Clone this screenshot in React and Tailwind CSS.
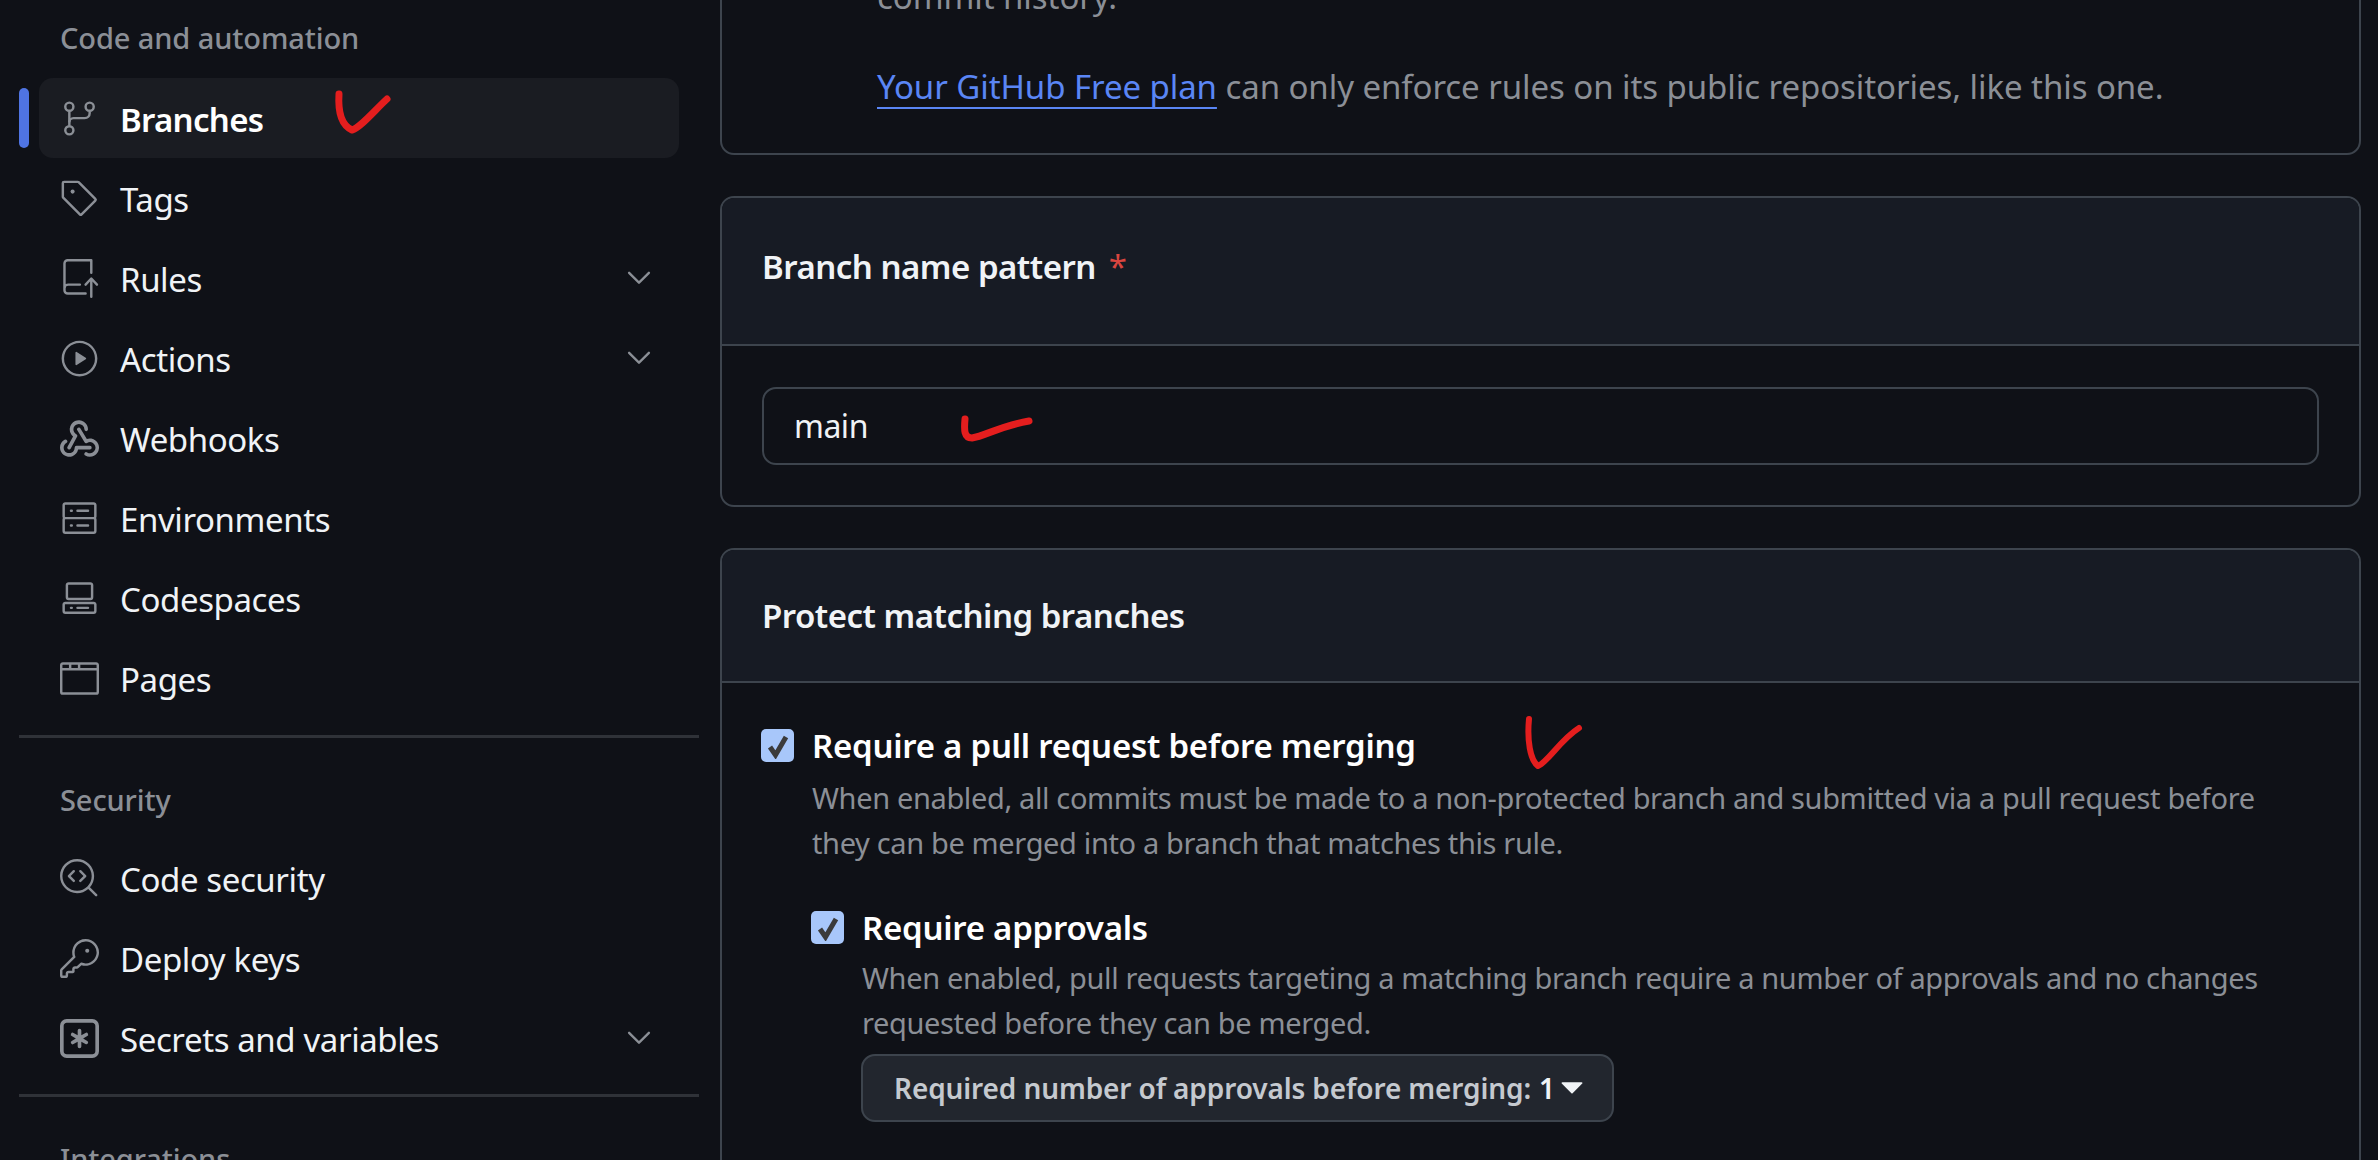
import {
  GoChevronDown,
  GoBrowser,
  GoCodescan,
  GoCodespaces,
  GoGitBranch,
  GoKey,
  GoPlay,
  GoRepoPush,
  GoServer,
  GoTag,
  GoTriangleDown,
} from "react-icons/go";

function WebhookIcon({ size, className }) {
  return (
    <svg width={size} height={size} viewBox="0 0 16 16" fill="currentColor" className={className}>
      <path d="M5.5 4.25a2.25 2.25 0 0 1 4.5 0 .75.75 0 0 0 1.5 0 3.75 3.75 0 1 0-6.14 2.889l-2.272 4.258a.75.75 0 0 0 1.324.706L7 7.25a.75.75 0 0 0-.309-1.015A2.25 2.25 0 0 1 5.5 4.25Z" />
      <path d="M7.364 3.607a.75.75 0 0 1 1.03.257l2.608 4.349a3.75 3.75 0 1 1-.628 6.785.75.75 0 0 1 .752-1.299 2.25 2.25 0 1 0-.033-3.88.75.75 0 0 1-1.03-.256L7.107 4.636a.75.75 0 0 1 .257-1.03Z" />
      <path d="M2.9 8.776A.75.75 0 0 1 2.625 9.8 2.25 2.25 0 1 0 6 11.75a.75.75 0 0 1 .75-.751h5.5a.75.75 0 0 1 0 1.5H7.425a3.751 3.751 0 1 1-5.55-3.998.75.75 0 0 1 1.024.274Z" />
    </svg>
  );
}

function KeyAsteriskIcon({ size, className }) {
  return (
    <svg width={size} height={size} viewBox="0 0 16 16" fill="currentColor" className={className}>
      <path d="M0 2.75A2.75 2.75 0 0 1 2.75 0h10.5A2.75 2.75 0 0 1 16 2.75v10.5A2.75 2.75 0 0 1 13.25 16H2.75A2.75 2.75 0 0 1 0 13.25ZM2.75 1.5c-.69 0-1.25.56-1.25 1.25v10.5c0 .69.56 1.25 1.25 1.25h10.5c.69 0 1.25-.56 1.25-1.25V2.75c0-.69-.56-1.25-1.25-1.25Z" />
      <path d="M8 4a.75.75 0 0 1 .75.75V6.7l1.69-.975a.75.75 0 0 1 .75 1.3L9.5 8l1.69.976a.75.75 0 0 1-.75 1.298L8.75 9.3v1.951a.75.75 0 0 1-1.5 0V9.299l-1.69.976a.75.75 0 0 1-.75-1.3L6.5 8l-1.69-.975a.75.75 0 0 1 .75-1.3l1.69.976V4.75A.75.75 0 0 1 8 4Z" />
    </svg>
  );
}

function NavRow({ icon: Icon, label, active, chevron }) {
  return (
    <div className="relative h-[80px] pl-[20px] pr-[20px]">
      {active && (
        <span className="absolute left-0 top-[10px] h-[60px] w-[10px] rounded-full bg-[#4f74e3]" />
      )}
      <div
        className={
          "flex h-full items-center rounded-[14px] pl-[21px] pr-[21px] " +
          (active ? "bg-[#1a1c22]" : "")
        }
      >
        <Icon size={39} className="shrink-0 text-[#8b8f96]" />
        <span
          className={
            "ml-[21px] flex-1 pt-[3px] text-[33px] " +
            (active ? "font-semibold tracking-[-0.7px] text-white" : "tracking-[-0.4px] text-[#f0f3f6]")
          }
        >
          {label}
        </span>
        {chevron && <GoChevronDown size={38} className="shrink-0 text-[#8b8f96]" />}
      </div>
    </div>
  );
}

function Heading({ children, className }) {
  return (
    <h3 className={"h-[44px] pl-[41px] text-[29px] font-medium leading-[44px] tracking-[-0.1px] text-[#8b8f96] " + className}>
      {children}
    </h3>
  );
}

function Divider({ className }) {
  return <div className={"h-[3px] bg-[#2f3238] " + className} />;
}

function Sidebar() {
  return (
    <aside className="w-[720px] shrink-0 pl-[19px] pr-[21px] pt-[16px]">
      <Heading className="mb-[18px]">Code and automation</Heading>
      <NavRow icon={GoGitBranch} label="Branches" active />
      <NavRow icon={GoTag} label="Tags" />
      <NavRow icon={GoRepoPush} label="Rules" chevron />
      <NavRow icon={GoPlay} label="Actions" chevron />
      <NavRow icon={WebhookIcon} label="Webhooks" />
      <NavRow icon={GoServer} label="Environments" />
      <NavRow icon={GoCodespaces} label="Codespaces" />
      <NavRow icon={GoBrowser} label="Pages" />
      <Divider className="mt-[17px]" />
      <Heading className="mb-[16px] mt-[40px]">Security</Heading>
      <NavRow icon={GoCodescan} label="Code security" />
      <NavRow icon={GoKey} label="Deploy keys" />
      <NavRow icon={KeyAsteriskIcon} label="Secrets and variables" chevron />
      <Divider className="mt-[16px]" />
      <Heading className="mt-[40px]">Integrations</Heading>
    </aside>
  );
}

function Checkbox() {
  return (
    <span className="flex h-[33px] w-[33px] shrink-0 items-center justify-center rounded-[5px] bg-[#a8c7fa]">
      <svg width="26" height="26" viewBox="0 0 26 26">
        <path d="M5 14 L10.5 22 L21 4" fill="none" stroke="#3b3b3b" strokeWidth="5" />
      </svg>
    </span>
  );
}

function CardHeader({ children, className }) {
  return (
    <div className={"flex items-center rounded-t-[12px] border-b-2 border-[#3d444d] bg-[#171b24] pl-[40px] text-[33px] font-semibold tracking-[-0.5px] text-[#f0f3f6] " + className}>
      {children}
    </div>
  );
}

function Main() {
  return (
    <main className="flex w-[1641px] flex-col gap-[41px]">
      <section className="-mt-[66px] rounded-b-[14px] border-2 border-[#3d444d] pb-[44px] pl-[155px] pt-[38px] text-[33px] leading-[45px] tracking-[-0.07px] text-[#8b8f96]">
        <p>commit history.</p>
        <p className="mt-[45px]">
          <a className="text-[#5a86f5] underline decoration-2 underline-offset-[8px]">Your GitHub Free plan</a> can only enforce rules on its public repositories, like this one.
        </p>
      </section>

      <section className="rounded-[14px] border-2 border-[#3d444d]">
        <CardHeader className="h-[148px] pb-[8px]">
          Branch name pattern <span className="ml-[13px] font-normal text-[#d9453f]">*</span>
        </CardHeader>
        <div className="px-[40px] pb-[40px] pt-[41px]">
          <div className="flex h-[78px] items-center rounded-[14px] border-2 border-[#3d444d] pl-[30px] text-[32px] tracking-[-0.5px] text-[#f0f3f6]">
            main
          </div>
        </div>
      </section>

      <section className="rounded-[14px] border-2 border-[#3d444d]">
        <CardHeader className="h-[133px]">Protect matching branches</CardHeader>
        <div className="pb-[200px] pl-[39px] pt-[46px]">
          <div className="flex h-[33px] items-center gap-[18px]">
            <Checkbox />
            <span className="text-[33px] font-semibold tracking-[-0.25px] text-white">Require a pull request before merging</span>
          </div>
          <p className="ml-[51px] mt-[13px] text-[29px] leading-[45px] tracking-[-0.36px] text-[#8b8f96]">
            When enabled, all commits must be made to a non-protected branch and submitted via a pull request before
            <br />
            they can be merged into a branch that matches this rule.
          </p>
          <div className="ml-[50px] mt-[46px]">
            <div className="flex h-[33px] items-center gap-[18px]">
              <Checkbox />
              <span className="text-[33px] font-semibold tracking-[-0.25px] text-white">Require approvals</span>
            </div>
            <p className="ml-[51px] mt-[11px] text-[29px] leading-[45px] tracking-[-0.36px] text-[#8b8f96]">
              When enabled, pull requests targeting a matching branch require a number of approvals and no changes
              <br />
              requested before they can be merged.
            </p>
            <div className="ml-[50px] mt-[9px] flex h-[68px] w-[753px] items-center rounded-[14px] border-2 border-[#3d444d] bg-[#22262e] pl-[31px] text-[28px] font-semibold tracking-[-0.12px] text-[#c5c9cf]">
              Required number of approvals before merging: <span className="ml-[8px] text-[#f0f3f6]">1</span>
              <GoTriangleDown size={40} className="-ml-[3px] text-[#f0f3f6]" />
            </div>
          </div>
        </div>
      </section>
    </main>
  );
}

export default function App() {
  return (
    <div className="relative flex h-[1160px] w-[2378px] overflow-hidden bg-[#0f1117] font-['Noto_Sans',sans-serif]">
      <Sidebar />
      <Main />
      {/* red pen marks drawn on top of the screenshot */}
      <svg className="pointer-events-none absolute left-0 top-0" width="2378" height="1160" fill="none" stroke="#e41e1e" strokeLinecap="round" strokeLinejoin="round">
        <path d="M339 94C338 110 341 125 352 130C360 128 375 110 387 99" strokeWidth="7" />
        <path d="M965 419C964 430 964 438 972 438C985 436 1000 426 1029 421" strokeWidth="7" />
        <path d="M1529 719C1527 740 1530 760 1538 766C1548 762 1560 740 1579 728" strokeWidth="6" />
      </svg>
    </div>
  );
}
